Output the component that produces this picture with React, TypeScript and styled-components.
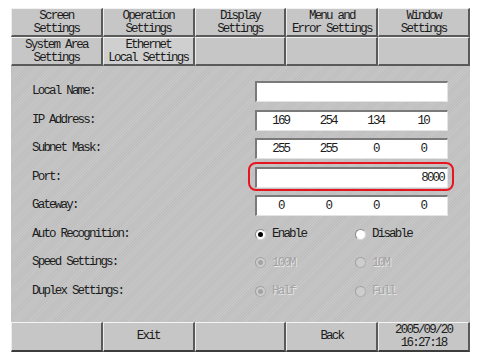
import React from "react";
import styled, { createGlobalStyle } from "styled-components";

const Global = createGlobalStyle`
  body {
    margin: 0;
    background: #ffffff;
    font-family: "Liberation Mono", "DejaVu Sans Mono", monospace;
  }
`;

const Panel = styled.div`
  margin: 8px 11px;
  width: 459px;
  height: 344px;
  display: grid;
  grid-template-rows: 29px 28px 1fr 30px;
  background: repeating-linear-gradient(135deg, #c6c6c6 0 1px, #bfbfbf 1px 2px);
  color: #1c1c1c;
  font-size: 12.5px;
  letter-spacing: -1.8px;
`;

const TabRow = styled.div`
  display: grid;
  grid-template-columns: repeat(5, 1fr);
`;

const Tab = styled.div<{ $active?: boolean }>`
  box-sizing: border-box;
  display: flex;
  flex-direction: column;
  align-items: center;
  justify-content: center;
  line-height: 12.5px;
  padding-top: 1px;
  background: ${(p) => (p.$active ? "#cfcfcf" : "#c6c6c6")};
  border-top: 1px solid #f2f2f2;
  border-left: 1px solid #ececec;
  border-right: 2px solid #5a5a5a;
  border-bottom: 2px solid #5a5a5a;
`;

const Content = styled.div`
  position: relative;
  display: grid;
  grid-template-columns: 223px 193px;
  grid-auto-rows: 21px;
  row-gap: 7.5px;
  align-items: center;
  padding: 16px 22px 0 21px;
`;

const Label = styled.div`
  line-height: 21px;
`;

const Field = styled.div<{ $cols?: number; $right?: boolean }>`
  box-sizing: border-box;
  height: 21px;
  background: #ffffff;
  border-top: 2px solid #7a7a7a;
  border-left: 2px solid #7a7a7a;
  border-right: 1px solid #e4e4e4;
  border-bottom: 1px solid #e4e4e4;
  display: grid;
  grid-template-columns: repeat(${(p) => p.$cols ?? 1}, 1fr);
  justify-items: ${(p) => (p.$right ? "end" : "center")};
  align-items: center;
  padding-right: ${(p) => (p.$right ? "3px" : "0")};
`;

const Highlight = styled.div`
  position: relative;
  &::after {
    content: "";
    position: absolute;
    left: -7px;
    right: -6px;
    top: -5px;
    bottom: -3px;
    border: 2px solid #e8141e;
    border-radius: 8px;
  }
`;

const RadioGroup = styled.div`
  display: grid;
  grid-template-columns: 100px 93px;
`;

const Radio = styled.div<{ $disabled?: boolean }>`
  display: flex;
  align-items: center;
  gap: 6px;
  color: ${(p) => (p.$disabled ? "#a4a4a4" : "#1c1c1c")};
  text-shadow: ${(p) => (p.$disabled ? "1px 1px 0 #e6e6e6" : "none")};
`;

const Dot = styled.span<{ $on?: boolean; $disabled?: boolean }>`
  box-sizing: border-box;
  width: 11px;
  height: 11px;
  border-radius: 50%;
  background: ${(p) => (p.$disabled ? "#cdcdcd" : "#ffffff")};
  border: 1px solid ${(p) => (p.$disabled ? "#b0b0b0" : "#d8d8d8")};
  border-top-color: ${(p) => (p.$disabled ? "#a0a0a0" : "#8a8a8a")};
  border-left-color: ${(p) => (p.$disabled ? "#a0a0a0" : "#8a8a8a")};
  display: flex;
  align-items: center;
  justify-content: center;
  &::after {
    content: "";
    width: 5px;
    height: 5px;
    border-radius: 50%;
    background: ${(p) => (p.$on ? (p.$disabled ? "#a4a4a4" : "#000") : "transparent")};
  }
`;

const BottomBar = styled.div`
  display: grid;
  grid-template-columns: repeat(5, 1fr);
`;

const Button = styled.div`
  box-sizing: border-box;
  display: flex;
  flex-direction: column;
  align-items: center;
  justify-content: center;
  line-height: 12.5px;
  background: #c6c6c6;
  border-top: 1px solid #f4f4f4;
  border-left: 1px solid #ececec;
  border-right: 2px solid #5a5a5a;
  border-bottom: 2px solid #3c3c3c;
`;

const ip = ["169", "254", "134", "10"];
const mask = ["255", "255", "0", "0"];
const gateway = ["0", "0", "0", "0"];

const App: React.FC = () => {
  return (
    <>
      <Global />
      <Panel>
        <TabRow>
          <Tab>
            <span>Screen</span>
            <span>Settings</span>
          </Tab>
          <Tab>
            <span>Operation</span>
            <span>Settings</span>
          </Tab>
          <Tab>
            <span>Display</span>
            <span>Settings</span>
          </Tab>
          <Tab>
            <span>Menu and</span>
            <span>Error Settings</span>
          </Tab>
          <Tab>
            <span>Window</span>
            <span>Settings</span>
          </Tab>
        </TabRow>
        <TabRow>
          <Tab>
            <span>System Area</span>
            <span>Settings</span>
          </Tab>
          <Tab $active>
            <span>Ethernet</span>
            <span>Local Settings</span>
          </Tab>
          <Tab />
          <Tab />
          <Tab />
        </TabRow>
        <Content>
          <Label>Local Name:</Label>
          <Field />
          <Label>IP Address:</Label>
          <Field $cols={4}>
            {ip.map((v, i) => (
              <span key={i}>{v}</span>
            ))}
          </Field>
          <Label>Subnet Mask:</Label>
          <Field $cols={4}>
            {mask.map((v, i) => (
              <span key={i}>{v}</span>
            ))}
          </Field>
          <Label>Port:</Label>
          <Highlight>
            <Field $right>
              <span>8000</span>
            </Field>
          </Highlight>
          <Label>Gateway:</Label>
          <Field $cols={4}>
            {gateway.map((v, i) => (
              <span key={i}>{v}</span>
            ))}
          </Field>
          <Label>Auto Recognition:</Label>
          <RadioGroup>
            <Radio>
              <Dot $on />
              Enable
            </Radio>
            <Radio>
              <Dot />
              Disable
            </Radio>
          </RadioGroup>
          <Label>Speed Settings:</Label>
          <RadioGroup>
            <Radio $disabled>
              <Dot $on $disabled />
              100M
            </Radio>
            <Radio $disabled>
              <Dot $disabled />
              10M
            </Radio>
          </RadioGroup>
          <Label>Duplex Settings:</Label>
          <RadioGroup>
            <Radio $disabled>
              <Dot $on $disabled />
              Half
            </Radio>
            <Radio $disabled>
              <Dot $disabled />
              Full
            </Radio>
          </RadioGroup>
        </Content>
        <BottomBar>
          <Button />
          <Button>Exit</Button>
          <Button />
          <Button>Back</Button>
          <Button>
            <span>2005/09/20</span>
            <span>16:27:18</span>
          </Button>
        </BottomBar>
      </Panel>
    </>
  );
};

export default App;
